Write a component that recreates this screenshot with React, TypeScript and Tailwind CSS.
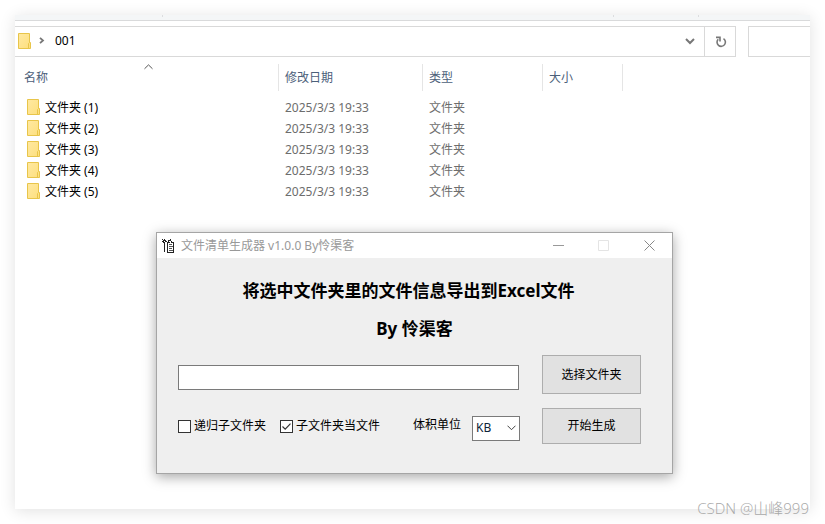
import React from "react";

const folders = [1, 2, 3, 4, 5].map((n) => ({
  name: `文件夹 (${n})`,
  date: "2025/3/3 19:33",
  type: "文件夹",
}));

function FolderIcon() {
  return (
    <svg width="13" height="16" viewBox="0 0 13 16" className="block shrink-0">
      <defs>
        <linearGradient id="folder" x1="0" y1="0" x2="1" y2="1">
          <stop offset="0" stopColor="#ffe9a2" />
          <stop offset="1" stopColor="#fddf7d" />
        </linearGradient>
      </defs>
      <path d="M0.5 0.5H11.5V9.5H12.5V15.5H0.5Z" fill="url(#folder)" stroke="#e8c54a" />
      <path d="M10.5 15.5V10.5L11.5 9.5" fill="none" stroke="#e8c54a" />
    </svg>
  );
}

function AppIcon() {
  return (
    <svg width="13" height="14" viewBox="0 0 13 14" className="block" fill="none" stroke="#222" shapeRendering="crispEdges">
      <path d="M0 0.5H1M2 0.5H3M1 1.5H4M0 2.5H2M3 2.5H5M1 3.5H3M2.5 4V13M5.5 4V13M5 3.5H8M6 2.5H7M6 1.5H9M8 0.5H9M9 2.5H10M9 3.5H12M11.5 4V13M5 13.5H12" />
      <path d="M7 5.5H10M7 7.5H11M7 9.5H10M7 11.5H11" stroke="#555" />
    </svg>
  );
}

function Explorer() {
  return (
    <>
      <div className="flex h-[6px] items-start justify-between border-b border-[#d9dadb] bg-[#f4f6f7] pr-[111px] pl-[147px]">
        <span className="h-[2px] w-px bg-[#dcdddf]" />
        <span className="flex gap-[84px]">
          <span className="h-[2px] w-px bg-[#dcdddf]" />
          <span className="h-[2px] w-px bg-[#dcdddf]" />
        </span>
      </div>
      <div className="mt-[5px] flex h-[31px] gap-3">
        <div className="flex flex-1 items-center border-y border-r border-[#d9d9d9] text-black">
          <div className="flex flex-1 items-center pb-[2px] pl-[3px]">
            <FolderIcon />
            <svg width="6" height="7" viewBox="0 0 6 7" className="ml-2" fill="none" stroke="#777" strokeWidth="1.8">
              <path d="M1 0.8L4 3.5L1 6.2" />
            </svg>
            <span className="ml-[10px]">001</span>
          </div>
          <button aria-label="展开" className="flex h-full w-[30px] items-center justify-center border-r border-[#d9d9d9]">
            <svg width="10" height="7" viewBox="0 0 10 7" fill="none" stroke="#777" strokeWidth="2">
              <path d="M1 1L5 5L9 1" />
            </svg>
          </button>
          <button aria-label="刷新" className="flex h-full w-[30px] items-center justify-center">
            <svg width="12" height="12" viewBox="0 0 12 12" className="ml-[2px]" fill="none" stroke="#777" strokeWidth="1.6">
              <path d="M8.5 2.6A4.2 4.2 0 1 1 3.2 3.2" />
              <path d="M1 1.4H5V5.4" />
            </svg>
          </button>
        </div>
        <input aria-label="搜索" className="w-[62px] border-y border-l border-[#d9d9d9] bg-white outline-none" />
      </div>
      <table className="mt-[7px] w-[608px] table-fixed border-separate border-spacing-0 text-left">
        <colgroup>
          <col className="w-[264px]" />
          <col className="w-[144px]" />
          <col className="w-[120px]" />
          <col className="w-[80px]" />
        </colgroup>
        <thead className="text-[#4c607a]">
          <tr className="h-[27px]">
            <th className="relative border-r border-[#e5e5e5] pl-[9px] font-normal">
              名称
              <svg width="9" height="6" viewBox="0 0 9 6" className="absolute top-0 left-[129px]" fill="none" stroke="#555">
                <path d="M0.5 4.8L4.5 0.9L8.5 4.8" />
              </svg>
            </th>
            <th className="border-r border-[#e5e5e5] pl-[6px] font-normal">修改日期</th>
            <th className="border-r border-[#e5e5e5] pl-[6px] font-normal">类型</th>
            <th className="border-r border-[#e5e5e5] pl-[6px] font-normal">大小</th>
          </tr>
        </thead>
        <tbody className="text-[#6d6d6d]">
          <tr className="h-[6px]" aria-hidden="true" />
          {folders.map((f) => (
            <tr key={f.name} className="h-[21px]">
              <td className="pl-3 text-black">
                <span className="flex items-start gap-[5px]">
                  <FolderIcon />
                  {f.name}
                </span>
              </td>
              <td className="pl-[6px]">{f.date}</td>
              <td className="pl-[6px]">{f.type}</td>
              <td />
            </tr>
          ))}
        </tbody>
      </table>
    </>
  );
}

function CheckBox({ id, label, checked = false }: { id: string; label: string; checked?: boolean }) {
  return (
    <label htmlFor={id} className="flex items-center gap-[3px]">
      <span className="grid">
        <input
          id={id}
          type="checkbox"
          defaultChecked={checked}
          className="peer col-start-1 row-start-1 size-[13px] appearance-none border border-[#333] bg-white"
        />
        <svg
          viewBox="0 0 13 13"
          className="pointer-events-none invisible col-start-1 row-start-1 size-[13px] peer-checked:visible"
          fill="none"
          stroke="#333"
          strokeWidth="1.2"
        >
          <path d="M2.5 6.5L5.2 9.2L10.5 3.7" />
        </svg>
      </span>
      {label}
    </label>
  );
}

function GeneratorWindow() {
  return (
    <section className="absolute top-[217px] left-[141px] w-[517px] border border-[#a5a5a5] bg-[#efefef] pb-[29px] text-black shadow-[0_3px_12px_rgba(0,0,0,0.35)]">
      <header className="flex h-[25px] items-center bg-white pl-[5px] text-[#999]">
        <AppIcon />
        <span className="ml-[6px] flex-1">文件清单生成器 v1.0.0 By怜渠客</span>
        <button aria-label="最小化" className="flex w-[46px] justify-center">
          <svg width="11" height="11" viewBox="0 0 11 11" stroke="#999">
            <path d="M0 5.5H11" />
          </svg>
        </button>
        <button aria-label="最大化" disabled className="flex w-[45px] justify-center">
          <svg width="11" height="11" viewBox="0 0 11 11" fill="none" stroke="#e4e4e4">
            <path d="M0.5 0.5H10.5V10.5H0.5Z" />
          </svg>
        </button>
        <button aria-label="关闭" className="flex w-[46px] justify-center">
          <svg width="11" height="11" viewBox="0 0 11 11" stroke="#888">
            <path d="M0.5 0.5L10.5 10.5M10.5 0.5L0.5 10.5" />
          </svg>
        </button>
      </header>
      <h1 className="mt-[14px] pr-3 text-center text-[17px] leading-[38px] font-bold">
        将选中文件夹里的文件信息导出到Excel文件
      </h1>
      <p className="text-center text-[17px] leading-[38px] font-bold">By 怜渠客</p>
      <div className="mt-[7px] flex items-end gap-[23px] pr-[31px] pl-[21px]">
        <input aria-label="文件夹路径" className="mb-1 h-[25px] min-w-0 flex-1 border border-[#7a7a7a] bg-white px-1 outline-none" />
        <button className="h-[39px] w-[99px] border border-[#adadad] bg-[#e1e1e1]">选择文件夹</button>
      </div>
      <div className="mt-[14px] flex items-center pr-[31px] pl-[21px]">
        <div className="flex gap-[14px]">
          <CheckBox id="recursive" label="递归子文件夹" />
          <CheckBox id="as-file" label="子文件夹当文件" checked />
        </div>
        <label htmlFor="unit" className="mb-[2px] ml-auto">
          体积单位
        </label>
        <div className="mt-1 ml-[11px] grid items-center">
          <select
            id="unit"
            defaultValue="KB"
            className="col-start-1 row-start-1 h-[25px] w-[48px] appearance-none border border-[#7a7a7a] bg-white pl-[3px] text-[#0d2438] outline-none"
          >
            <option>KB</option>
            <option>MB</option>
            <option>GB</option>
          </select>
          <svg
            width="9"
            height="6"
            viewBox="0 0 9 6"
            className="pointer-events-none col-start-1 row-start-1 mr-1 justify-self-end"
            fill="none"
            stroke="#444"
          >
            <path d="M0.5 0.7L4.5 4.7L8.5 0.7" />
          </svg>
        </div>
        <button className="ml-[22px] h-[36px] w-[99px] border border-[#adadad] bg-[#e1e1e1]">开始生成</button>
      </div>
    </section>
  );
}

export default function App() {
  return (
    <div className="relative flex min-h-screen bg-white p-[15px] font-['Noto_Sans','Noto_Sans_CJK_SC',sans-serif] text-[12px] leading-[18px]">
      <main className="relative min-w-0 flex-1 bg-white shadow-[0_2px_15px_rgba(0,0,0,0.12)]">
        <Explorer />
        <GeneratorWindow />
      </main>
      <span className="absolute right-[16px] bottom-[6px] font-['Open_Sans','Noto_Sans_CJK_SC',sans-serif] text-[15px] leading-[20px] font-light text-[#a8a8a8]">
        CSDN @山峰999
      </span>
    </div>
  );
}
